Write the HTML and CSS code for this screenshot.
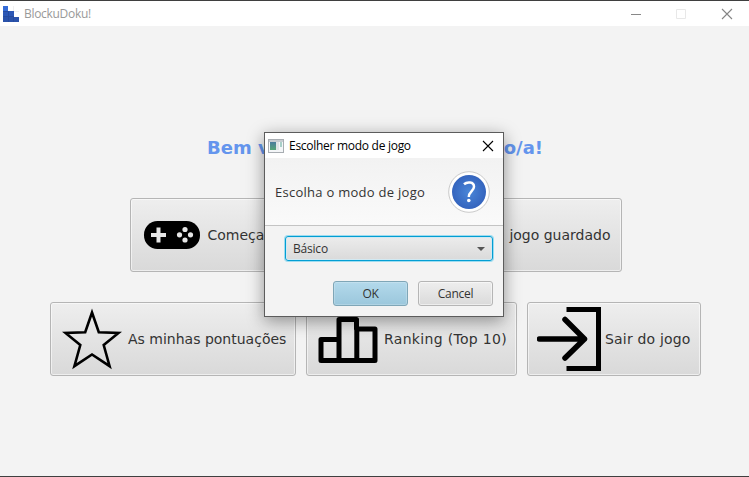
FILE: index.html
```html
<!DOCTYPE html>
<html lang="pt">
<head>
<meta charset="utf-8">
<title>BlockuDoku!</title>
<link rel="stylesheet" href="styles.css">
</head>
<body>
<div class="window">
  <header class="titlebar">
    <svg class="app-icon" width="16" height="16" viewBox="0 0 16 16"><path fill="#2c57b5" d="M0 0h5v5h6v6h5v5H0z"/><path fill="#346bd6" d="M0 0h5v5H0z"/><path fill="#2a52aa" d="M0 11h16v5H0z"/><path stroke="#264b9e" fill="none" d="M0 5.500h5M0 10.500h11M5.500 5v11M10.500 11v5"/><path stroke="#f0f0f0" fill="none" d="M10.500 0v5M11 5.500h5"/></svg>
    <span class="app-title">BlockuDoku!</span>
    <svg class="controls" width="104" height="12" viewBox="0 0 104 12" fill="none"><path stroke="#888" d="M0 6.500h10"/><path stroke="#e8e8e8" d="M45.500 1.500h9v9h-9z"/><path stroke="#858585" stroke-width="1.100" d="M91 1l10 10M101 1l-10 10"/></svg>
  </header>
  <main class="content">
    <h1 class="welcome"><span>Bem v</span><span>o/a!</span></h1>
    <div class="row row-top">
      <div class="btn btn-start">
        <svg width="64" height="64" viewBox="0 0 64 64"><rect x="4" y="18" width="56" height="28" rx="13.500"/><path stroke="#e6e6e6" stroke-width="4" d="M11 32h15M18.500 24.500v15"/><g fill="#e6e6e6"><circle cx="45" cy="26.500" r="2.600"/><circle cx="39.500" cy="31.800" r="2.600"/><circle cx="50.500" cy="31.800" r="2.600"/><circle cx="45" cy="37" r="2.600"/></g></svg>
        <span>Começar</span>
      </div>
      <div class="btn btn-saved"><span>um</span><span>jogo guardado</span></div>
    </div>
    <div class="row">
      <div class="btn btn-scores">
        <svg width="64" height="64" viewBox="0 0 64 64"><path fill="none" stroke="#000" stroke-width="2.600" d="M32 5.500L38.800 25.200 58.500 25.900 43.700 38 49.600 59.200 32 47.500 14.400 59.200 20.300 38 5.500 25.900 25.200 25.200z"/></svg>
        <span>As minhas pontuações</span>
      </div>
      <div class="btn btn-ranking">
        <svg width="64" height="64" viewBox="0 0 64 64"><path fill="none" stroke="#000" stroke-width="5" stroke-linejoin="round" d="M5 32.500h18V12.500h17.500v9.500h18.500v31.500H5zM23 32v21M40.800 22v31"/></svg>
        <span>Ranking (Top 10)</span>
      </div>
      <div class="btn btn-exit">
        <svg width="64" height="64" viewBox="0 0 64 64" fill="none" stroke="#000" stroke-width="5"><path d="M29.500 2.500H61.500V61.500H29.500"/><path stroke-width="5.500" stroke-linecap="round" stroke-linejoin="round" d="M2.500 32H47.500M28 12.500L47.500 32 28 51"/></svg>
        <span>Sair do jogo</span>
      </div>
    </div>
  </main>
  <section class="dialog">
    <div class="dialog-title">
      <svg width="16" height="14" viewBox="0 0 16 14"><defs><linearGradient id="pane" x2="0" y2="1"><stop stop-color="#4a7c9e"/><stop offset="1" stop-color="#55a576"/></linearGradient></defs><rect x=".5" y=".5" width="15" height="13" fill="#f4f6f8" stroke="#a8adb2"/><path fill="#c7ccd1" d="M1 1h14v2H1z"/><path fill="url(#pane)" d="M2 3h6v8H2z"/><path fill="#dfe4e6" d="M8 3h3v8H8z"/><path fill="#a8cfc8" d="M12 3h2v5h-2z"/></svg>
      <span>Escolher modo de jogo</span>
      <svg class="close" width="12" height="12" viewBox="0 0 12 12"><path fill="none" stroke="#000" stroke-width="1.100" d="M1 1l10 10M11 1L1 11"/></svg>
    </div>
    <div class="dialog-header">
      <span>Escolha o modo de jogo</span>
      <svg width="42" height="42" viewBox="0 0 42 42"><defs><radialGradient id="q"><stop stop-color="#4a86d8"/><stop offset="1" stop-color="#3464be"/></radialGradient></defs><circle cx="21" cy="21" r="20.300" fill="#fff" stroke="#cacaca"/><circle cx="21" cy="21" r="17" fill="url(#q)"/><path fill="none" stroke="#fff" stroke-width="2.500" d="M16 13.300C19 10.600 26 10.500 26 15.800C26 20 20.800 20.500 20.800 26"/><circle cx="20.800" cy="29.500" r="1.800" fill="#fff"/></svg>
    </div>
    <div class="dialog-body">
      <div class="combo"><span>Básico</span><i class="arrow"></i></div>
      <div class="actions"><div class="small ok">OK</div><div class="small">Cancel</div></div>
    </div>
  </section>
</div>
</body>
</html>
```
FILE: styles.css
```css
* { box-sizing: border-box; }
body { margin: 0; background: #f3f3f3; overflow: hidden; }
.window {
  position: relative;
  display: flex;
  flex-direction: column;
  width: 749px;
  height: 477px;
  border-top: 1px solid #3f3f3f;
  border-bottom: 1px solid #3f3f3f;
  color: #333;
}
.titlebar {
  display: flex;
  align-items: center;
  height: 25px;
  padding: 0 14px 0 3px;
  background: #fff;
}
.app-icon { margin-right: 5px; }
.app-title { font: 12px/16px "Open Sans", sans-serif; letter-spacing: -.3px; color: #999; }
.controls { margin-left: auto; }
.content { display: flex; flex-direction: column; align-items: center; padding-top: 110px; }
.welcome {
  display: flex;
  justify-content: space-between;
  width: 336px;
  margin: 0 0 38px 1px;
  font: bold 18px/24px "DejaVu Sans", sans-serif;
  color: #6495ed;
}
.row { display: flex; gap: 10px; }
.row-top { margin: 0 0 30px 2px; }
.row:last-child { margin-left: 2px; }
.btn {
  display: flex;
  align-items: center;
  height: 74px;
  padding: 0 9px;
  gap: 4px;
  border: 1px solid #b5b5b5;
  border-radius: 3px;
  background: linear-gradient(#eee, #d9d9d9);
  box-shadow: inset 0 0 0 1px rgba(255, 255, 255, .55);
  font: 14px "DejaVu Sans", sans-serif;
  white-space: nowrap;
}
.btn svg { flex: none; }
.btn-start { width: 220px; }
.btn-saved { width: 262px; gap: 6px; padding-right: 10px; justify-content: flex-end; }
.btn-scores { width: 246px; }
.btn-ranking { width: 211px; letter-spacing: .32px; }
.btn-exit { width: 174px; letter-spacing: .18px; }
.dialog {
  position: absolute;
  left: 264px;
  top: 131px;
  width: 240px;
  height: 185px;
  border: 1px solid #5c5c5c;
  background: #f3f3f3;
  box-shadow: 0 4px 16px rgba(0, 0, 0, .4);
  font-family: "Open Sans", sans-serif;
}
.dialog-title {
  display: flex;
  align-items: center;
  gap: 5px;
  height: 25px;
  padding: 0 9px 0 3px;
  background: #fff;
  color: #000;
  font-size: 12px;
  line-height: 16px;
  letter-spacing: -.28px;
}
.close { margin-left: auto; }
.dialog-header {
  display: flex;
  align-items: center;
  justify-content: space-between;
  height: 68px;
  padding: 0 13px 0 10px;
  border-bottom: 1px solid #c4c4c4;
  background: linear-gradient(#f2f2f2, #fafafa);
  font-size: 13px;
  letter-spacing: .27px;
}
.dialog-body { padding: 10px 10px 0 20px; }
.combo {
  display: flex;
  align-items: center;
  justify-content: space-between;
  height: 25px;
  padding: 0 7px;
  border: 1px solid #039ed3;
  border-radius: 3px;
  background: linear-gradient(#ececec, #dadada);
  box-shadow: 0 0 0 1px #9ddcf0, inset 0 0 0 1px #d2e9f2;
  font-size: 12px;
  letter-spacing: -.2px;
}
.arrow { border: 4px solid transparent; border-top-color: #555; border-bottom: 0; }
.actions { display: flex; justify-content: flex-end; gap: 10px; margin-top: 20px; }
.small {
  width: 75px;
  height: 25px;
  border: 1px solid #b5b5b5;
  border-radius: 3px;
  background: linear-gradient(#eee, #dadada);
  box-shadow: inset 0 0 0 1px rgba(255, 255, 255, .5);
  font-size: 12px;
  line-height: 24px;
  letter-spacing: -.3px;
  text-align: center;
}
.ok { border-color: #7fa6b7; background: linear-gradient(#b3d9eb, #9bc7dc); box-shadow: inset 0 0 0 1px rgba(255, 255, 255, .2); }
```
